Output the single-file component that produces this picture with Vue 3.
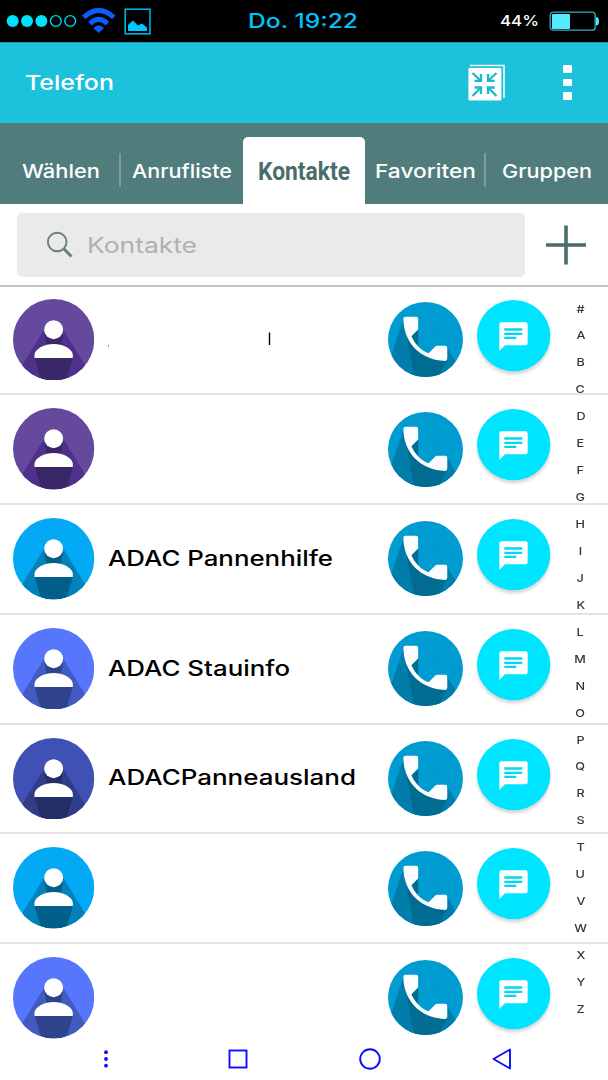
<script setup>
import { h } from 'vue'

// Wide lettering: the text is fitted to a fixed width.
const WideText = (props) =>
  h('svg', { width: props.w, height: 30, viewBox: `0 0 ${props.w} 30`, overflow: 'visible', class: 'wide' }, [
    h('text', { x: 0, y: 22, 'font-size': props.size, textLength: props.w, lengthAdjust: 'spacingAndGlyphs', fill: 'currentColor' }, props.text)
  ])
WideText.props = ['text', 'w', 'size']

const purple = ['#65499d', '#4f308a', '#3a2768']
const sky = ['#03a9f4', '#0281bb', '#025f8a']
const iris = ['#5677fc', '#415bc0', '#2f438d']
const indigo = ['#3f51b5', '#303e8a', '#232e67']

const contacts = [
  { tone: purple, marks: true },
  { tone: purple },
  { tone: sky, name: 'ADAC Pannenhilfe', w: 225 },
  { tone: iris, name: 'ADAC Stauinfo', w: 182 },
  { tone: indigo, name: 'ADACPanneausland', w: 248 },
  { tone: sky },
  { tone: iris }
]
const letters = '#ABCDEFGHIJKLMNOPQRSTUVWXYZ'.split('')
</script>

<template>
  <main class="phone">
    <header class="status">
      <svg class="signal" width="152" height="42" viewBox="0 0 152 42">
        <g fill="#00e1ff"><circle cx="12.7" cy="21" r="6" /><circle cx="27" cy="21" r="6" /><circle cx="41.4" cy="21" r="6" /></g>
        <g fill="none" stroke="#00d5f5" stroke-width="1.4"><circle cx="55.8" cy="21" r="5.4" /><circle cx="70.2" cy="21" r="5.4" /></g>
        <g fill="none" stroke="#0a5cff" stroke-width="5">
          <path d="M83.800 17.400Q98.700 3.200 113.800 17.400" /><path d="M90 23.600Q98.700 15.200 107.400 23.600" />
        </g>
        <path d="M93.500 28.200Q98.700 22.200 103.900 28.200L98.700 33Z" fill="#0a5cff" />
        <rect x="125.2" y="9.2" width="24.8" height="24.6" fill="none" stroke="#00baf2" stroke-width="1.5" />
        <path d="M128 31V25L133 20.5L138 25.5L142 23.5L147 27.5V31Z" fill="#00c8ff" />
      </svg>
      <div class="clock"><WideText text="Do. 19:22" :w="110" :size="19.5" /></div>
      <div class="percent"><WideText text="44%" :w="39" :size="15" /></div>
      <svg class="battery" width="52" height="22" viewBox="0 0 52 22">
        <rect x="1.2" y="2.2" width="45" height="18" rx="3" fill="none" stroke="#35aebd" stroke-width="1.3" />
        <rect x="3" y="4" width="18" height="15" rx="1" fill="#57eafa" />
        <path d="M47 7Q50 7 50 11.500Q50 15.500 47 15.500Z" fill="#57eafa" />
      </svg>
    </header>

    <section class="appbar">
      <div class="title"><WideText text="Telefon" :w="89" :size="20.5" /></div>
      <svg class="collapse" width="38" height="38" viewBox="0 0 38 38">
        <path d="M2 1.500H36V34" fill="none" stroke="#fff" stroke-width="1.500" />
        <rect x="0.400" y="4" width="33" height="32.500" rx="1" fill="#fff" />
        <g fill="none" stroke="#1cb8d2" stroke-width="2.300">
          <path d="M4.500 9L12.500 16.500M6.500 16.800H13V10" /><path d="M28.500 9L20.500 16.500M26.700 16.800H20V10" />
          <path d="M4.500 32L12.500 24M6.500 23.500H13V30" /><path d="M28.500 32L20.500 24M26.700 23.500H20V30" />
        </g>
      </svg>
      <div class="more"><i /><i /><i /></div>
    </section>

    <nav class="tabs">
      <div class="tab first"><WideText text="Wählen" :w="78" :size="18.5" /></div>
      <div class="tab second"><WideText text="Anrufliste" :w="100" :size="18.5" /></div>
      <div class="tab active">
        <svg width="92" height="30" overflow="visible"><text x="0" y="22.500" font-size="26.500" textLength="92" lengthAdjust="spacingAndGlyphs" fill="#4b6c6d">Kontakte</text></svg>
      </div>
      <div class="tab fourth"><WideText text="Favoriten" :w="101" :size="18.5" /></div>
      <div class="tab fifth"><WideText text="Gruppen" :w="90" :size="18.5" /></div>
    </nav>

    <section class="search">
      <div class="field">
        <svg width="28" height="28" viewBox="0 0 28 28" fill="none" stroke="#648083">
          <circle cx="10.200" cy="11" r="9.300" stroke-width="1.900" /><path d="M16.500 17.500L24.500 25.500" stroke-width="3" />
        </svg>
        <WideText class="hint" text="Kontakte" :w="110" :size="21" />
      </div>
      <svg class="plus" width="40" height="40" viewBox="0 0 40 40"><path d="M0 20H40M20 0.500V39.500" stroke="#4c6b6d" stroke-width="3.600" /></svg>
    </section>

    <section class="body">
      <ul class="list">
        <li v-for="(c, i) in contacts" :key="i" class="row">
          <svg class="avatar" viewBox="40 42 244 244">
            <defs><clipPath :id="'a' + i"><circle cx="162" cy="164" r="122" /></clipPath></defs>
            <g :clip-path="`url(#a${i})`">
              <rect x="40" y="42" width="244" height="244" :fill="c.tone[0]" />
              <path d="M133 134L66 244V290H258V244L191 134Z" :fill="c.tone[1]" />
              <path d="M134 145L142 185H183L190 145ZM105 218L126 290H198L220 218Z" :fill="c.tone[2]" />
            </g>
            <circle cx="162" cy="134" r="28.500" fill="#fff" />
            <path d="M104.500 219V209C106 191 135 177 162 177S218 191 219.500 209V219Z" fill="#fff" />
          </svg>
          <div class="name">
            <WideText v-if="c.name" :text="c.name" :w="c.w" :size="21" />
            <svg v-if="c.marks" width="170" height="20" viewBox="0 0 170 20"><path d="M161.500 3.500V16" stroke="#000" stroke-width="1.400" /><path d="M.5 16V18" stroke="#999" /></svg>
          </div>
          <svg class="call" viewBox="54 52 224 224">
            <defs><clipPath :id="'c' + i"><circle cx="166" cy="164" r="112" /></clipPath></defs>
            <g :clip-path="`url(#c${i})`">
              <rect x="54" y="52" width="224" height="224" fill="#009bd0" />
              <path d="M100 104L60 222V280H245L260 238L231 188L193 187L144 134Z" fill="#007dab" />
              <path d="M103 123L133 280H202L231 225L193 187L175 208L144 190V134L124 154Z" fill="#006c91" />
              <path d="M144 134V191L175 205L193 187L201 183L231 190L245 150Z" fill="#009bd0" />
              <path d="M144 134L124 154C130 170 137 181 144 188Z" fill="#006c91" />
            </g>
            <path d="M106 96H138Q144 96 144 102V134L124 154C134 177 152 196 175 205L193 187Q197 183 202 183H225Q231 183 231 189V221Q231 228 225 228C150 226 100 172 100 102Q100 96 106 96Z" fill="#fcfdff" />
          </svg>
          <svg class="message" viewBox="320 44 220 214">
            <ellipse cx="430" cy="151" rx="110" ry="107" fill="#00e5ff" />
            <path d="M393 111H466Q472 111 472 117V174Q472 180 466 180H404L387 197V117Q387 111 393 111Z" fill="#fff" />
            <path d="M402 129H456V136H402ZM402 142H456V149H402ZM402 154H438V161H402Z" fill="#00d9f2" />
          </svg>
        </li>
      </ul>
      <div class="index"><span v-for="l in letters" :key="l"><b>{{ l }}</b></span></div>
      <footer class="system">
        <svg width="26" height="26" viewBox="0 0 26 26"><circle cx="13" cy="6.200" r="1.900" /><circle cx="13" cy="13" r="1.900" /><circle cx="13" cy="19.700" r="1.900" /></svg>
        <svg width="26" height="26" viewBox="0 0 26 26"><rect x="4.500" y="4.500" width="17" height="17" /></svg>
        <svg width="26" height="26" viewBox="0 0 26 26"><circle cx="13" cy="13" r="9.800" /></svg>
        <svg width="26" height="26" viewBox="0 0 26 26"><path d="M4.500 13L21 3.500V22.500Z" stroke-linejoin="round" /></svg>
      </footer>
    </section>
  </main>
</template>

<style>
html, body { margin: 0; background: #fff; }
</style>

<style scoped>
.phone { width: 608px; height: 1080px; overflow: hidden; display: flex; flex-direction: column; background: #fff; font-family: Inter, "Noto Sans", sans-serif; color: #fff; }
svg { display: block; flex: none; }
.status { height: 42px; flex: none; background: #000; display: flex; align-items: center; }
.clock { margin-left: 96px; padding-bottom: 1px; color: #00c3fc; font-weight: 500; }
.percent { margin: -4px 0 0 142px; font-weight: 500; }
.battery { margin-left: 10px; }
.appbar { height: 81px; flex: none; background: #1cc1dc; display: flex; align-items: center; box-shadow: inset 0 1px #1796ad; }
.title { margin-left: 25px; font-weight: 500; }
.collapse { margin-left: 354px; }
.more { margin-left: 57px; display: grid; gap: 6px; }
.more i { width: 9px; height: 7.800px; background: #fff; border-radius: 1px; }
.tabs { height: 81px; flex: none; background: #507d7b; display: grid; grid-template-columns: 121px 122px 122px 121px 122px; align-items: end; font-weight: 500; }
.tab { height: 34px; margin-bottom: 17px; box-sizing: border-box; display: flex; align-items: center; padding-top: 1px; }
.first { padding-left: 22px; border-right: 2px solid #819b9a; }
.second { padding-left: 11px; }
.active { margin: 0; height: 67.500px; padding: 3px 0 0 15px; background: #fff; border-radius: 5px 5px 0 0; font-family: Roboto, sans-serif; font-weight: 700; }
.fourth { padding-left: 10px; border-right: 2px solid #819b9a; }
.fifth { padding-left: 16px; }
.search { height: 83px; flex: none; display: flex; align-items: center; border-bottom: 2px solid #bfc4c9; box-sizing: border-box; padding: 0 22px 0 17px; justify-content: space-between; }
.field { width: 508px; height: 64px; border-radius: 5px; background: #eaeaea; display: flex; align-items: center; gap: 12px; padding-left: 30px; box-sizing: border-box; color: #aeb1b3; }
.hint { margin-top: 3px; }
.body { height: 793px; display: grid; grid-template-columns: 1fr; grid-template-rows: 100%; }
.list, .index, .system { grid-area: 1 / 1; }
.list { list-style: none; margin: -1.500px 0 0; padding: 0; }
.row { height: 109.750px; box-sizing: border-box; border-bottom: 2px solid #e2e3e3; display: flex; align-items: center; padding: 0 0 0 13.300px; }
.row:last-child { border-color: transparent; }
.avatar { width: 81.300px; height: 81.300px; }
.name { width: 280px; margin-left: 13.500px; color: #000; font-weight: 500; }
.call { width: 75px; height: 75px; }
.message { width: 73.300px; height: 71.300px; margin: -8px 0 0 13.700px; overflow: visible; filter: drop-shadow(0 3px 1.500px rgba(0, 0, 0, .16)); }
.index { justify-self: end; width: 55px; padding-top: 9px; display: flex; flex-direction: column; color: #30393b; }
.index span { height: 26.940px; display: flex; justify-content: center; align-items: center; font-size: 11px; line-height: 1; }
.index span:first-child { height: 26.500px; }
.index b { font-weight: 500; transform: scaleX(1.150); }
.system { align-self: end; display: grid; grid-template-columns: repeat(4, 26px); column-gap: 106px; margin: 0 0 8px 93px; }
.system svg { fill: none; stroke: #0b0bff; stroke-width: 1.900; }
.system svg:first-child { fill: #0b0bff; stroke: none; }
</style>
